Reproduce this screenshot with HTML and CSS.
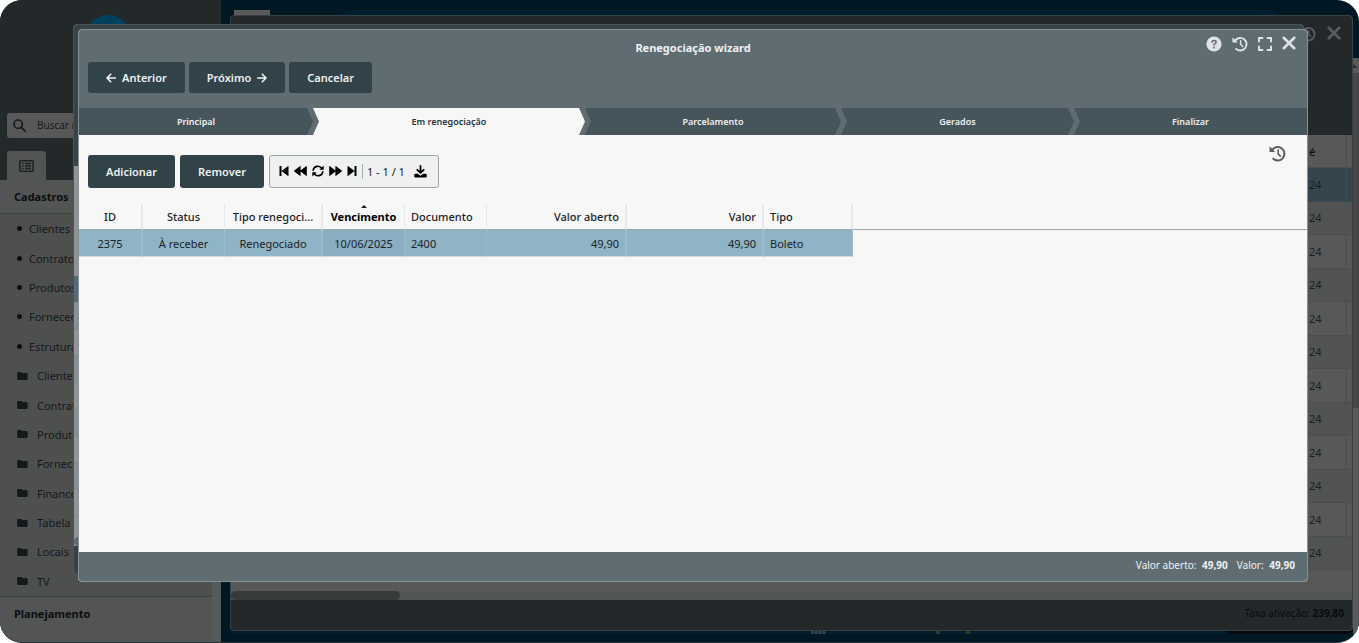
FILE: index.html
```html
<!DOCTYPE html>
<html lang="pt-BR">
<head>
<meta charset="utf-8">
<title>Renegociação wizard</title>
<link rel="stylesheet" href="styles.css">
</head>
<body>
<svg class="defs" aria-hidden="true">
  <symbol id="history" viewBox="0 0 16 16"><path d="M3.2 4.4A6.3 6.3 0 1 1 4 12.9" fill="none" stroke="currentColor" stroke-width="1.9" stroke-linecap="round"/><path d="M.5 1.2v5.3h5.3z" fill="currentColor"/><path d="M8.6 4.8v3.5l2.1 2.2" fill="none" stroke="currentColor" stroke-width="1.5" stroke-linecap="round"/></symbol>
  <symbol id="close" viewBox="0 0 12 12"><path d="M1.5 1.5l9 9M10.500 1.5l-9 9" fill="none" stroke="currentColor" stroke-width="2.2" stroke-linecap="round"/></symbol>
  <symbol id="folder" viewBox="0 0 12 10"><path d="M1.300.5h3.200l1.400 1.300h4.500q1.200 0 1.200 1.200v5.200q0 1.200-1.200 1.200H1.300Q.2 9.400.2 8.200V1.600Q.2.5 1.300.5z" fill="currentColor"/></symbol>
  <symbol id="first" viewBox="0 0 10 12"><path d="M.5 1h2v10h-2zM9.500 1.600v8.800q0 .8-.8.4L2.500 6l6.200-4.800q.8-.4.8.4z" fill="currentColor"/></symbol>
  <symbol id="rewind" viewBox="0 0 13 12"><path d="M6.600 1.600v8.800q0 .8-.7.4L.3 6.500q-.5-.5 0-1l5.600-4.300q.7-.4.7.4zM12.800 1.600v8.800q0 .8-.7.4L6.500 6.500q-.5-.5 0-1l5.600-4.300q.7-.4.7.4z" fill="currentColor"/></symbol>
</svg>
<div class="app">
  <aside class="sidebar">
    <header class="brand">
      <span class="logo"></span>
      <label class="search">
        <svg width="13" height="13" viewBox="0 0 14 14"><circle cx="5.600" cy="5.600" r="4.500" fill="none" stroke="currentColor" stroke-width="1.800"/><path d="M9 9l4 4" stroke="currentColor" stroke-width="2" stroke-linecap="round"/></svg>
        <input type="search" placeholder="Buscar no menu" aria-label="Buscar no menu">
      </label>
      <button class="tab" aria-label="Menu">
        <svg width="15" height="12" viewBox="0 0 15 12"><rect x=".8" y=".8" width="13.400" height="10.400" rx="1.200" fill="none" stroke="currentColor" stroke-width="1.600"/><path d="M3 3.500h1.500M3 6h1.500M3 8.500h1.500M6 3.500h6M6 6h6M6 8.500h6" stroke="currentColor" stroke-width="1.400"/></svg>
      </button>
    </header>
    <nav class="menu">
      <h2>Cadastros</h2>
      <ul>
        <li><a class="leaf" href="#">Clientes</a></li>
        <li><a class="leaf" href="#">Contratos</a></li>
        <li><a class="leaf" href="#">Produtos</a></li>
        <li><a class="leaf" href="#">Fornecedores</a></li>
        <li><a class="leaf" href="#">Estrutura</a></li>
        <li><a href="#"><svg><use href="#folder"/></svg>Clientes</a></li>
        <li><a href="#"><svg><use href="#folder"/></svg>Contratos</a></li>
        <li><a href="#"><svg><use href="#folder"/></svg>Produtos</a></li>
        <li><a href="#"><svg><use href="#folder"/></svg>Fornecedores</a></li>
        <li><a href="#"><svg><use href="#folder"/></svg>Financeiro</a></li>
        <li><a href="#"><svg><use href="#folder"/></svg>Tabela</a></li>
        <li><a href="#"><svg><use href="#folder"/></svg>Locais</a></li>
        <li><a href="#"><svg><use href="#folder"/></svg>TV</a></li>
      </ul>
      <h2 class="last">Planejamento</h2>
    </nav>
  </aside>
  <main class="desk">
    <span class="desk-tab"></span>
    <div class="panel"></div>
    <div class="strip"><span class="mark"></span><span class="dot"></span><span class="dot"></span><span class="tray"></span></div>
    <div class="page-scroll"><span class="arrow"></span><span class="thumb"></span></div>
  </main>

  <section class="window list-window">
    <header class="list-head">
      <button class="icon" aria-label="Histórico"><svg width="16" height="16"><use href="#history"/></svg></button>
      <button class="icon" aria-label="Fechar"><svg width="14" height="14"><use href="#close"/></svg></button>
    </header>
    <div class="list-body">
      <table>
        <colgroup><col><col class="c-date"><col class="c-end"></colgroup>
        <thead><tr><th></th><th>é</th><th></th></tr></thead>
        <tbody>
          <tr class="selected"><td></td><td>24</td><td></td></tr>
          <tr><td></td><td>24</td><td></td></tr>
          <tr><td></td><td>24</td><td></td></tr>
          <tr><td></td><td>24</td><td></td></tr>
          <tr><td></td><td>24</td><td></td></tr>
          <tr><td></td><td>24</td><td></td></tr>
          <tr><td></td><td>24</td><td></td></tr>
          <tr><td></td><td>24</td><td></td></tr>
          <tr><td></td><td>24</td><td></td></tr>
          <tr><td></td><td>24</td><td></td></tr>
          <tr><td></td><td>24</td><td></td></tr>
          <tr><td></td><td>24</td><td></td></tr>
        </tbody>
      </table>
    </div>
    <div class="hscroll"><span></span></div>
    <footer>Taxa ativação: <b>239,80</b></footer>
  </section>

  <section class="window back-window">
    <div class="back-head"></div>
    <div class="back-rows"><i class="on"></i><i></i><i></i><i></i><i></i><i></i><i></i><i></i><i></i></div>
    <div class="back-gap"><span></span></div>
    <div class="back-foot"></div>
  </section>

  <section class="window wizard" role="dialog" aria-labelledby="wizard-title">
    <header class="titlebar">
      <h1 id="wizard-title">Renegociação wizard</h1>
      <div class="controls">
        <button class="icon" aria-label="Ajuda"><svg width="16" height="16" viewBox="0 0 16 16"><circle cx="8" cy="8" r="7.600" fill="currentColor"/><path d="M5.900 6.300q.2-1.700 2.100-1.700 2.100 0 2.100 1.600 0 1-1.100 1.500-1 .4-1 1.200" fill="none" stroke="#5f6c72" stroke-width="1.500" stroke-linecap="round"/><circle cx="8" cy="11.400" r="1" fill="#5f6c72"/></svg></button>
        <button class="icon" aria-label="Histórico"><svg width="16" height="16"><use href="#history"/></svg></button>
        <button class="icon" aria-label="Tela cheia"><svg width="14" height="14" viewBox="0 0 14 14"><path d="M1 4.500V1h3.500M9.500 1H13v3.500M13 9.500V13H9.500M4.500 13H1V9.500" fill="none" stroke="currentColor" stroke-width="1.900" stroke-linecap="round"/></svg></button>
        <button class="icon close" aria-label="Fechar"><svg width="14" height="14"><use href="#close"/></svg></button>
      </div>
    </header>
    <div class="actions">
      <button class="btn"><svg width="10" height="10" viewBox="0 0 10 10"><path d="M9.300 5H1M4.700 1.200L1 5l3.700 3.800" fill="none" stroke="currentColor" stroke-width="1.600" stroke-linecap="round" stroke-linejoin="round"/></svg>Anterior</button>
      <button class="btn">Próximo<svg width="10" height="10" viewBox="0 0 10 10"><path d="M.7 5H9M5.300 1.200L9 5 5.300 8.800" fill="none" stroke="currentColor" stroke-width="1.600" stroke-linecap="round" stroke-linejoin="round"/></svg></button>
      <button class="btn">Cancelar</button>
    </div>
    <ol class="steps">
      <li class="s1">Principal</li>
      <li class="s2 current" aria-current="step">Em renegociação</li>
      <li class="s3">Parcelamento</li>
      <li class="s4">Gerados</li>
      <li class="s5">Finalizar</li>
    </ol>
    <div class="content">
      <div class="toolbar">
        <button class="btn">Adicionar</button>
        <button class="btn">Remover</button>
        <div class="pager">
          <button class="icon" aria-label="Primeira página"><svg width="10" height="12"><use href="#first"/></svg></button>
          <button class="icon" aria-label="Página anterior"><svg width="13" height="12"><use href="#rewind"/></svg></button>
          <button class="icon" aria-label="Atualizar"><svg width="12" height="12" viewBox="0 0 12 12"><path d="M1.200 5.200A4.700 4.700 0 0 1 9.800 3.500M10.800 6.800A4.700 4.700 0 0 1 2.200 8.500" fill="none" stroke="currentColor" stroke-width="1.600" stroke-linecap="round"/><path d="M11.700.5v4.300H7.400zM.3 11.500V7.200h4.300z" fill="currentColor"/></svg></button>
          <button class="icon flip" aria-label="Próxima página"><svg width="13" height="12"><use href="#rewind"/></svg></button>
          <button class="icon flip" aria-label="Última página"><svg width="10" height="12"><use href="#first"/></svg></button>
          <span class="range">1 - 1 / 1</span>
          <button class="icon" aria-label="Baixar"><svg width="13" height="13" viewBox="0 0 13 13"><path d="M6.500 1v6.500M3.300 4.800l3.200 3.100 3.200-3.100" fill="none" stroke="currentColor" stroke-width="1.800" stroke-linecap="round" stroke-linejoin="round"/><path d="M1.500 8.800h2.200l2.800 2 2.800-2h2.200q1.300 0 1.300 1.300v1.200q0 1.300-1.300 1.300h-10Q.2 12.600.2 11.300v-1.200q0-1.300 1.300-1.300z" fill="currentColor"/></svg></button>
        </div>
        <button class="icon log" aria-label="Histórico"><svg width="17" height="17"><use href="#history"/></svg></button>
      </div>
      <table class="grid">
        <colgroup><col class="w64"><col class="w82"><col class="w98"><col class="w82"><col class="w82"><col class="w140"><col class="w137"><col class="w89"><col></colgroup>
        <thead>
          <tr><th class="b2">ID</th><th>Status</th><th class="b2">Tipo renegoci...</th><th class="sorted" aria-sort="ascending">Vencimento</th><th class="l">Documento</th><th class="r b2">Valor aberto</th><th class="r b2">Valor</th><th class="l b2">Tipo</th><th class="fill"></th></tr>
        </thead>
        <tbody>
          <tr><td class="b2">2375</td><td>À receber</td><td class="b2">Renegociado</td><td class="sorted">10/06/2025</td><td class="l">2400</td><td class="r b2">49,90</td><td class="r b2">49,90</td><td class="l">Boleto</td><td class="fill"></td></tr>
        </tbody>
      </table>
    </div>
    <footer class="totals"><span>Valor aberto: <b>49,90</b></span><span>Valor: <b>49,90</b></span></footer>
  </section>
</div>
</body>
</html>
```
FILE: styles.css
```css
* { box-sizing: border-box; }
body { margin: 0; background: #fff; font-family: "Noto Sans", "Open Sans", sans-serif; font-size: 11px; line-height: 15px; color: #1b2226; }
h1, h2, ul, ol { margin: 0; padding: 0; list-style: none; font-size: 11px; }
button { font: inherit; color: inherit; border: 0; padding: 0; background: none; }
svg { display: block; flex: none; }
.defs { position: absolute; width: 0; height: 0; }
.icon { display: flex; }
.app { position: relative; display: flex; height: 100vh; overflow: hidden; border-radius: 22px; background: #001823; border-bottom: 1px solid #2b3337; }

.sidebar { width: 221px; display: flex; flex-direction: column; background: #23282b; }
.brand { height: 180px; flex: none; display: flex; flex-direction: column; padding: 15px 7px 0; }
.logo { width: 45px; height: 45px; margin-left: 79px; border-radius: 50%; background: #00415f; }
.search { display: flex; align-items: center; gap: 11px; height: 25px; margin-top: 53px; padding-left: 6px; border-radius: 3px; background: #585858; color: #15191b; }
.search input { flex: 1; min-width: 0; border: 0; padding: 0; background: none; font: inherit; font-size: 10px; outline: 0; }
.search input::placeholder { color: #15191b; opacity: 1; }
.tab { display: flex; align-items: center; justify-content: center; width: 39px; height: 29px; margin-top: 13px; border-radius: 3px 3px 0 0; background: #535554; color: #1d2225; }
.menu { flex: 1; display: flex; flex-direction: column; background: #535554; border-right: 9px solid #555b5c; color: #0b0e10; }
.menu h2 { height: 34px; padding: 9px 14px; border-bottom: 1px solid #3e4141; }
.menu h2.last { height: 46px; border: 0; border-top: 1px solid #3e4141; }
.menu ul { flex: 1; display: flex; flex-direction: column; background: #4e504f; }
.menu li { flex: 1; display: flex; align-items: center; padding-left: 17px; }
.menu a { display: flex; align-items: center; gap: 9px; color: #14181a; text-decoration: none; }
.menu a svg { width: 11px; height: 10px; }
.menu a.leaf { gap: 7px; }
.leaf::before { content: ""; width: 5px; height: 5px; border-radius: 50%; background: #0c1012; }

.desk { flex: 1; display: grid; grid-template-columns: 1fr 6px; grid-template-rows: 10px 1fr 8px; }
.desk-tab { grid-area: 2 / 1; width: 36px; height: 6px; margin-left: 13px; background: #5a5a5a; }
.panel { grid-area: 2 / 1; margin: 0 75px 0 120px; border-radius: 8px; background: #001f2d; }
.strip { grid-area: 2 / 1; align-self: end; display: flex; height: 6px; margin-left: 9px; padding-left: 581px; background: #001f2b; }
.mark { width: 15px; background: repeating-linear-gradient(90deg, #34464d 0 2px, #1a323b 2px 4px); }
.dot { width: 4px; margin-left: 110px; background: #24422b; }
.dot + .dot { margin-left: 26px; }
.tray { width: 127px; margin-left: auto; border-radius: 0 0 4px 4px; background: #060a0c; }
.page-scroll { grid-area: 1 / 2 / 4 / 3; margin: 58px 0 8px; background: #5a5a5a; }
.arrow { display: block; height: 15px; }
.arrow::before { content: ""; display: block; width: 5px; height: 15px; background: #2e3030; clip-path: polygon(0 6px, 5px 10px, 0 10px); }
.page-scroll .thumb { display: block; height: 335px; background: #484848; }

.window { position: absolute; display: flex; flex-direction: column; border: 1px solid #3a4144; border-radius: 4px; overflow: hidden; }
.list-window { inset: 15px 6px 11px 230px; background: #585858; }
.list-head { height: 119px; flex: none; display: flex; justify-content: flex-end; gap: 11px; padding: 10px 11px; background: #23282b; color: #595d5f; }
.list-body { flex: 1; padding-bottom: 21px; }
.list-body table { width: 100%; height: 100%; table-layout: fixed; border-collapse: separate; border-spacing: 0; }
.c-date { width: 38px; }
.c-end { width: 5px; }
.list-body th, .list-body td { height: 33px; padding: 0; text-align: left; border-bottom: 1px solid #4b4e4e; }
.list-body th { font-weight: 500; color: #0c0f10; }
.list-body th:nth-child(2), .list-body td:nth-child(2) { border-right: 2px solid #505252; }
.list-body td { background: #585858; color: #1b1e1f; }
.list-body tr:nth-child(even) td { background: #515453; }
.list-body .selected td:nth-child(n) { background: #34454d; border-color: #3a4a50; }
.hscroll { height: 9px; background: #525656; }
.hscroll span { display: block; width: 169px; height: 9px; border-radius: 5px; background: #373b3b; }
.list-window footer { height: 30px; padding: 6px 8px; background: #23282b; color: #090c0d; text-align: right; font-size: 10px; }

.back-window { inset: 24px 55px 67px 73px; background: #929292; border-color: #4b5458; }
.back-head { height: 141px; background: #394246; }
.back-rows { flex: 1; display: flex; flex-direction: column; margin-top: 110px; }
.back-rows i { flex: 1; border-bottom: 1px solid #858888; background: #949494; }
.back-rows i:nth-child(even) { background: #8c8f8f; }
.back-rows i.on { background: #546a75; }
.back-gap { height: 29px; padding-top: 20px; }
.back-gap span { display: block; width: 170px; height: 9px; border-radius: 5px; background: #606868; }
.back-foot { height: 28px; background: #394246; }

.wizard { inset: 29px 51px 60px 78px; border-color: #83929a; background: #f7f7f7; }
.titlebar { display: grid; grid-template-columns: 1fr auto 1fr; height: 32px; padding: 0 11px; background: #5f6c72; color: #eef1f2; }
.titlebar h1 { grid-column: 2; padding-top: 10px; }
.controls { display: flex; justify-content: flex-end; align-items: center; gap: 10px; height: 28px; color: #dfe3e5; }
.close { margin-bottom: 3px; }
.actions { display: flex; gap: 4px; padding: 0 9px 15px; background: #5f6c72; }
.btn { display: flex; align-items: center; justify-content: center; gap: 6px; height: 31px; padding: 0 18px; border-radius: 3px; background: #314249; color: #eef1f2; font-weight: 600; }
.steps { display: flex; background: #5f6c72; font-size: 9px; font-weight: 600; color: #eef1f2; }
.steps li { flex: 1 1 0; height: 27px; line-height: 27px; text-align: center; background: #46545b; clip-path: polygon(0 0, calc(100% - 6px) 0, 100% 50%, calc(100% - 6px) 100%, 0 100%, 6px 50%); }
.steps .s1 { flex-grow: 234; clip-path: polygon(0 0, calc(100% - 6px) 0, 100% 50%, calc(100% - 6px) 100%, 0 100%); }
.steps .s2 { flex-grow: 272; }
.steps .s3 { flex-grow: 256; }
.steps .s4 { flex-grow: 233; }
.steps .s5 { flex-grow: 233; clip-path: polygon(0 0, 100% 0, 100% 100%, 0 100%, 6px 50%); }
.steps .current { background: #f7f7f7; color: #26343b; }
.content { flex: 1; }
.toolbar { display: flex; gap: 5px; padding: 20px 9px 16px; }
.toolbar .btn { height: 33px; }
.pager { display: flex; align-items: center; gap: 5px; height: 33px; padding: 0 11px 0 9px; border: 1px solid #9ba5a9; border-radius: 3px; background: #eff1f1; color: #000; }
.pager .icon { padding-bottom: 2px; }
.flip svg { transform: scaleX(-1); }
.range { padding: 0 4px; border-left: 1px solid #a4adb1; color: #1b2226; }
.pager .icon:last-child { padding: 0; }
.log { margin: -10px 12px 0 auto; align-self: flex-start; color: #5c5c5c; }
.grid { width: 100%; table-layout: fixed; border-collapse: separate; border-spacing: 0; }
.w64 { width: 64px; } .w82 { width: 82px; } .w98 { width: 98px; }
.w140 { width: 140px; } .w137 { width: 137px; } .w89 { width: 89px; }
.grid th, .grid td { height: 26px; padding: 0 6px; text-align: center; white-space: nowrap; }
.grid th { position: relative; font-weight: 500; border-right: 1px solid #e6e7e7; border-bottom: 1px solid #9aa7a9; }
.grid th.sorted { font-weight: 700; color: #000; }
th.sorted::before { content: ""; position: absolute; top: 1px; left: 50%; margin-left: -3px; border: 3px solid transparent; border-top: 0; border-bottom-color: #1b2226; }
.grid td { height: 27px; background: #8fb4c5; border-right: 1px solid #a0bbc7; border-bottom: 1px solid #d5dbdd; }
.grid .b2 { border-right-width: 2px; }
.grid td.sorted { background: #89adc1; }
.grid .l { text-align: left; }
.grid .r { text-align: right; }
.grid .fill { border-right: 0; }
.grid td.fill { background: none; border-bottom: 0; }
.totals { display: flex; justify-content: flex-end; gap: 9px; height: 29px; padding: 6px 12px; background: #5f6c72; color: #eef1f2; font-size: 10px; }
.totals b { margin-left: 3px; }
```
